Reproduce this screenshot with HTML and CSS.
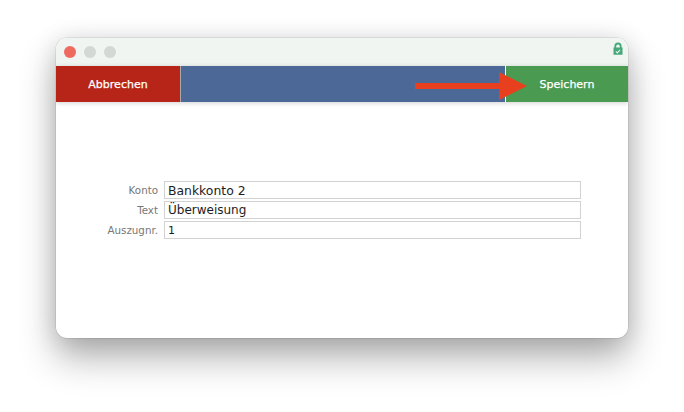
FILE: index.html
```html
<!DOCTYPE html>
<html lang="de">
<head>
<meta charset="utf-8">
<title>Buchung</title>
<link rel="stylesheet" href="styles.css">
</head>
<body>
<div class="window">
  <div class="titlebar">
    <span class="light light-red"></span>
    <span class="light"></span>
    <span class="light"></span>
    <svg class="lock" width="10" height="13" viewBox="0 0 10 13">
      <path d="M0.5 5.5V12.8H9.5V5.5H8.6V4A3.6 3.6 0 0 0 1.4 4V5.5Z M3.2 5.5V4.2A1.8 1.8 0 0 1 6.8 4.2V5.5Z" fill="#45a878" fill-rule="evenodd"/>
      <path d="M2.9 9.4L4.3 10.9L7.1 7.8" fill="none" stroke="#e6f3ec" stroke-width="1.1"/>
    </svg>
  </div>
  <div class="toolbar">
    <div class="btn btn-cancel">Abbrechen</div>
    <div class="toolbar-fill"></div>
    <div class="btn btn-save">Speichern</div>
    <svg class="arrow" width="112" height="28" viewBox="0 0 112 28">
      <path d="M0 11H84V0L112 14L84 28V17H0Z" fill="#e8401f"/>
    </svg>
  </div>
  <div class="form">
    <div class="row"><label class="label">Konto</label><div class="field">Bankkonto 2</div></div>
    <div class="row"><label class="label">Text</label><div class="field field-text">Überweisung</div></div>
    <div class="row"><label class="label">Auszugnr.</label><div class="field field-small">1</div></div>
  </div>
</div>
</body>
</html>
```
FILE: styles.css
```css
html, body {
  margin: 0;
  height: 100%;
  background: #fff;
  overflow: hidden;
}
body {
  padding: 38px 0 0 56px;
  box-sizing: border-box;
  font-family: "DejaVu Sans", Verdana, sans-serif;
}
.window {
  width: 572px;
  height: 300px;
  border-radius: 11px;
  background: #fff;
  overflow: hidden;
  box-shadow: 0 0 0 0.5px rgba(0,0,0,0.14), 0 20px 36px rgba(0,0,0,0.3), 0 2px 24px rgba(0,0,0,0.13);
  display: flex;
  flex-direction: column;
}
.titlebar {
  height: 28px;
  flex: none;
  background: #f0f5f2;
  display: flex;
  align-items: center;
  gap: 8px;
  padding: 0 5px 0 8px;
}
.light {
  width: 12px;
  height: 12px;
  border-radius: 50%;
  background: #d3d8d5;
}
.light-red { background: #ee6a5f; }
.lock {
  margin-left: auto;
  margin-top: -8px;
}
.toolbar {
  height: 36px;
  flex: none;
  position: relative;
  display: flex;
  background: #4c6896;
  box-shadow: 0 1px 5px rgba(0,0,0,0.18);
  color: #fff;
  font-size: 11px;
  -webkit-text-stroke: 0.25px #fff;
}
.btn {
  display: flex;
  align-items: center;
  justify-content: center;
  box-sizing: border-box;
}
.btn-cancel {
  width: 125px;
  background: #b72518;
  border-right: 1px solid #a9a9a9;
}
.toolbar-fill { flex: 1; }
.btn-save {
  width: 123px;
  background: #4a9a52;
  border-left: 1px solid #fff;
}
.arrow {
  position: absolute;
  left: 359px;
  top: 6px;
}
.form {
  padding-top: 79px;
  display: flex;
  flex-direction: column;
  gap: 2px;
}
.row {
  display: flex;
  align-items: center;
  height: 18px;
}
.label {
  width: 102px;
  text-align: right;
  font-size: 10.3px;
  color: #777;
}
.field {
  width: 417px;
  height: 18px;
  margin-left: 6px;
  box-sizing: border-box;
  border: 1px solid #d2d2d2;
  padding-left: 3px;
  font-size: 12.4px;
  line-height: 17px;
  color: #1c1c1c;
  background: #fff;
}
.field-text { font-size: 12px; }
.field-small { font-size: 11px; }
```
